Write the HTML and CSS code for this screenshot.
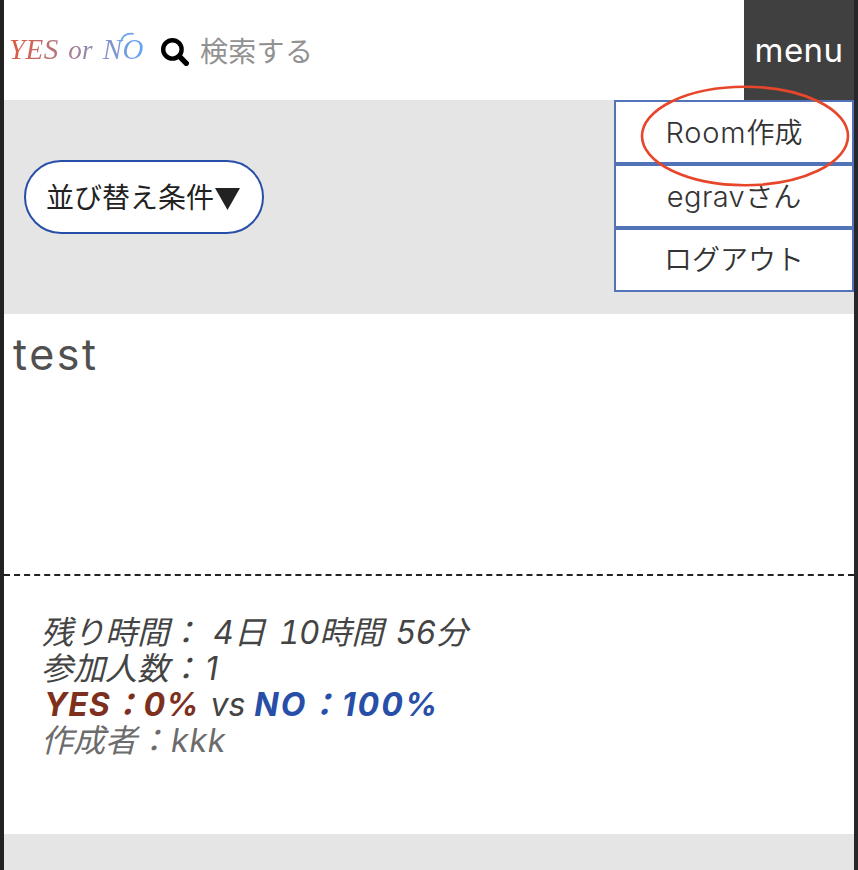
FILE: index.html
```html
<!DOCTYPE html>
<html lang="ja">
<head>
<meta charset="utf-8">
<title>YES or NO</title>
<link rel="stylesheet" href="styles.css">
</head>
<body>
<header class="header">
  <div class="brand">
    <h1 class="logo">YES <span class="logo-or">or</span> NO</h1>
    <svg class="swash" viewBox="0 0 14 10"><path d="M1 9C3 3 7 1 13 1.8" fill="none" stroke="#6fa4ee" stroke-width="1.8" stroke-linecap="round"/></svg>
  </div>
  <svg class="search-icon" viewBox="0 0 28 28"><circle cx="11.4" cy="11.4" r="9.2" fill="none" stroke="#000" stroke-width="4.4"/><path d="M18.4 18.4L25.3 25.3" stroke="#000" stroke-width="5.4" stroke-linecap="round"/></svg>
  <span class="search-label">検索する</span>
  <nav class="menu">
    <div class="menu-button"><span>menu</span></div>
    <ul class="menu-list">
      <li><span class="room">Room</span>作成</li>
      <li><span class="user">egrav</span>さん</li>
      <li>ログアウト</li>
    </ul>
    <svg class="highlight" viewBox="0 0 210 102"><ellipse cx="105" cy="51" rx="103" ry="49.2" fill="none" stroke="#e8462a" stroke-width="2.6"/></svg>
  </nav>
</header>
<section class="toolbar">
  <button class="sort">並び替え条件<svg class="triangle" viewBox="0 0 25 22"><path d="M0 0H25L12.5 22Z" fill="#222"/></svg></button>
</section>
<article class="room-card">
  <h2 class="title"><span>test</span></h2>
  <div class="info">
    <p class="time">残り時間： <span>4</span>日 <span class="hour">10</span>時間 <span class="minute">56</span>分</p>
    <p>参加人数：<span class="count">1</span></p>
    <p class="votes"><b class="yes">YES：0%</b><span class="vs">vs</span><b class="no">NO：100%</b></p>
    <p class="author">作成者：<span class="name">kkk</span></p>
  </div>
</article>
</body>
</html>
```
FILE: styles.css
```css
* { box-sizing: border-box; margin: 0; padding: 0; }
body {
  height: 870px;
  overflow: hidden;
  border: solid #232222;
  border-width: 0 4px;
  border-right-color: #27262b;
  background: #e5e5e5;
  color: #333;
  font-family: Inter, "Noto Sans CJK JP", sans-serif;
  font-weight: 400;
}
.header {
  position: relative;
  display: flex;
  align-items: center;
  height: 100px;
  background: #fff;
}
.brand { position: relative; width: 137px; margin: 0 -1px 1px 5px; }
.logo {
  font: italic 400 29px/46px "Liberation Serif", serif;
  letter-spacing: 0.4px;
  word-spacing: 2px;
  white-space: nowrap;
  background: linear-gradient(90deg, #e0583c, #a67c91 45%, #60a8ff);
  -webkit-background-clip: text;
  background-clip: text;
  color: transparent;
}
.logo-or { font-size: 27px; }
.swash { position: absolute; top: 6px; left: 111px; width: 14px; height: 10px; }
.search-icon { width: 28px; height: 28px; margin: 3px 11px 0 16px; }
.search-label { padding-top: 4px; font-size: 28px; line-height: 40px; color: #919191; letter-spacing: 0.3px; }
.menu { position: absolute; top: 0; right: 0; width: 240px; }
.menu-button {
  width: 110px;
  height: 100px;
  margin-left: auto;
  background: #404040;
  color: #fff;
  font-size: 33px;
  line-height: 101px;
  text-align: center;
}
.menu-button span { letter-spacing: 0.4px; }
.menu-list { list-style: none; }
.menu-list li {
  height: 64px;
  border: 2px solid #5373b9;
  background: #fff;
  font-size: 28px;
  font-weight: 350;
  line-height: 61px;
  text-align: center;
  white-space: nowrap;
}
.room { font-size: 29px; letter-spacing: 0.8px; }
.user { font-size: 29px; letter-spacing: 0.4px; }
.highlight { position: absolute; top: 85px; left: 26px; width: 210px; height: 102px; }
.toolbar { height: 214px; padding: 60px 20px; }
.sort {
  display: flex;
  align-items: center;
  width: 240px;
  height: 74px;
  padding: 0 0 2px 20px;
  border: 2px solid #274fa8;
  border-radius: 37px;
  background: #fff;
  color: #222;
  font: inherit;
  font-size: 28px;
  white-space: nowrap;
}
.triangle { flex: none; width: 25px; height: 22px; margin: 5px 0 0 1px; }
.room-card { height: 520px; background: #fff; }
.title {
  height: 262px;
  padding: 15px 9px;
  border-bottom: 2px dashed #222;
  color: #505050;
  font-size: 43px;
  font-weight: 400;
  line-height: 50px;
}
.title span { letter-spacing: 2.5px; }
.info {
  padding: 39px 37px;
  color: #444;
  font-size: 32px;
  font-style: italic;
  font-weight: 400;
  line-height: 36px;
  white-space: nowrap;
}
.info p { height: 36px; }
.time { word-spacing: 3.5px; font-variant-numeric: tabular-nums; }
.hour { margin-left: 1px; letter-spacing: -0.6px; }
.minute { letter-spacing: -0.6px; }
.count { margin-left: 4px; }
.votes { display: flex; }
.vs { margin: 0 9px 0 11px; }
.yes { margin-left: 3px; color: #7d301d; letter-spacing: 0.9px; }
.no { color: #274fa8; letter-spacing: 2.1px; }
.author { color: #6c6c6c; }
.name { margin-left: 2px; letter-spacing: 0.8px; }
```
